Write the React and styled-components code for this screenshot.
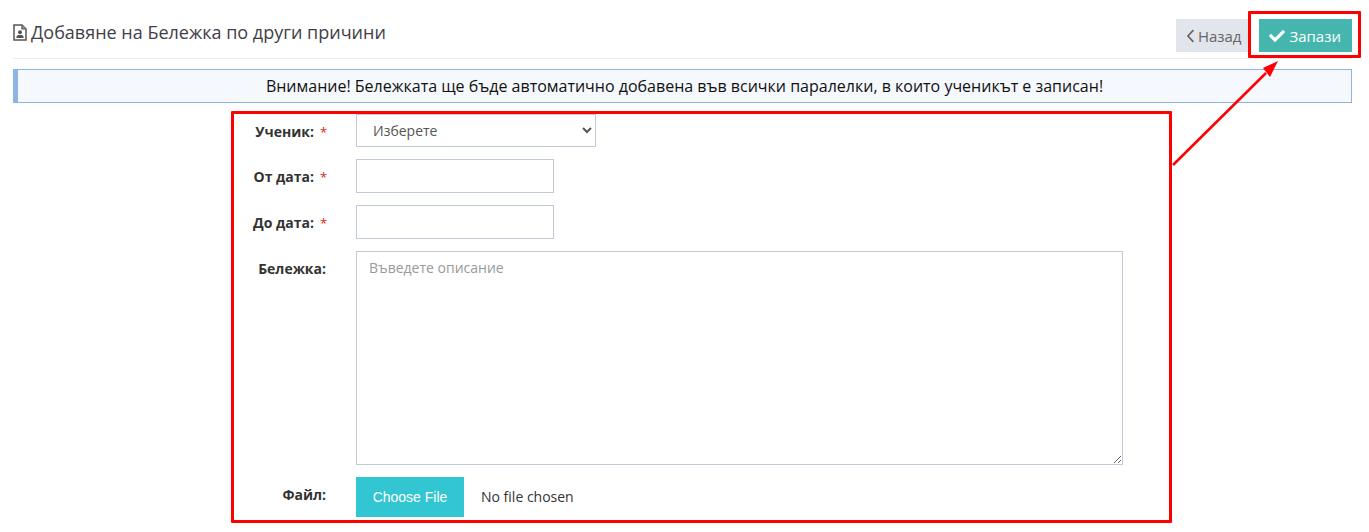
import React from 'react';
import styled, { createGlobalStyle } from 'styled-components';
import { FaCheck } from 'react-icons/fa';

const GlobalStyle = createGlobalStyle`
  html, body {
    margin: 0;
    padding: 0;
    background: #fff;
    font-family: "Open Sans", sans-serif;
  }
`;

const Page = styled.div`
  position: relative;
  width: 1369px;
  height: 532px;
  padding: 18px 17px 0 13px;
  box-sizing: border-box;
  overflow: hidden;
`;

const Header = styled.div`
  display: flex;
  justify-content: space-between;
  align-items: flex-start;
  height: 40px;
  border-bottom: 1px solid #ebedf2;
`;

const Title = styled.h3`
  display: flex;
  align-items: center;
  gap: 4px;
  margin: 0;
  padding-top: 2px;
  font-size: 18px;
  line-height: 24px;
  font-weight: 400;
  color: #3f4047;
`;

const Actions = styled.div`
  display: flex;
  gap: 8px;
  margin-top: 1px;
`;

const ActionButton = styled.button`
  display: flex;
  align-items: center;
  gap: ${props => (props.primary ? '4px' : '3px')};
  height: 33px;
  border: none;
  padding: 0 ${props => (props.primary ? '11px' : '10px')} 0 10px;
  background: ${props => (props.primary ? '#44b6ae' : '#e1e5ec')};
  color: ${props => (props.primary ? '#fff' : '#666')};
  font-family: "Open Sans", sans-serif;
  font-size: 15px;
`;

const Notice = styled.div`
  margin-top: 10px;
  height: 34px;
  box-sizing: border-box;
  border: 1px solid #8eb4e3;
  border-left-width: 5px;
  background: #f5f8fd;
  color: #111;
  font-size: 16px;
  line-height: 32px;
  text-align: center;
`;

const Form = styled.form`
  display: flex;
  flex-direction: column;
  gap: 12px;
  margin-top: 11px;
`;

const Row = styled.div`
  display: grid;
  grid-template-columns: 313px 1fr;
  column-gap: 30px;
  align-items: start;
`;

const Label = styled.label`
  display: flex;
  justify-content: flex-end;
  gap: 6px;
  padding-top: 8px;
  font-size: 14px;
  line-height: 20px;
  font-weight: 700;
  color: #333;
`;

const Star = styled.span`
  width: 6px;
  color: #e02222;
  font-size: 13px;
  font-weight: 400;
`;

const Select = styled.select`
  display: block;
  width: 240px;
  height: 33px;
  box-sizing: border-box;
  border: 1px solid #c2cad8;
  border-radius: 0;
  padding: 0 12px;
  background: #fff;
  color: #555;
  font-family: "Open Sans", sans-serif;
  font-size: 14px;
`;

const DateInput = styled.input`
  display: block;
  width: 198px;
  height: 34px;
  box-sizing: border-box;
  border: 1px solid #c2cad8;
  background: #fff;
`;

const Note = styled.textarea`
  display: block;
  width: 767px;
  height: 214px;
  box-sizing: border-box;
  border: 1px solid #c2cad8;
  border-radius: 0;
  padding: 6px 12px;
  outline: none;
  font-family: "Open Sans", sans-serif;
  font-size: 14px;
  line-height: 20px;

  &::placeholder {
    color: #999;
    opacity: 1;
  }
`;

const FileInput = styled.input`
  display: block;
  height: 40px;
  font-family: "Open Sans", sans-serif;
  font-size: 14px;
  line-height: 40px;
  color: #333;

  &::file-selector-button {
    width: 108px;
    height: 40px;
    margin-right: 17px;
    border: none;
    background: #32c5d2;
    color: #fff;
    font-family: "Liberation Sans", sans-serif;
    font-size: 14px;
  }
`;

const Marker = styled.div`
  position: absolute;
  left: ${props => props.x}px;
  top: ${props => props.y}px;
  width: ${props => props.w}px;
  height: ${props => props.h}px;
  box-sizing: border-box;
  border: 3px solid #ff0000;
  border-radius: 1px;
  pointer-events: none;
`;

const Arrow = styled.svg`
  position: absolute;
  left: 1165px;
  top: 55px;
  pointer-events: none;
`;

const NoteIcon = () => (
  <svg width="14" height="17" viewBox="0 0 14 17">
    <path d="M1 1h8l4 4v11H1z" fill="#fff" stroke="#555" strokeWidth="1.5" />
    <path d="M9 1v4h4" fill="#999" stroke="#555" strokeWidth="1.2" />
    <circle cx="7" cy="8.2" r="2" fill="#555" />
    <path d="M3.5 14v-1.4c0-1 1-1.6 3.5-1.6s3.5.6 3.5 1.6V14z" fill="#555" />
  </svg>
);

const ChevronLeft = () => (
  <svg width="9" height="14" viewBox="0 0 9 14">
    <path d="M7.4 1.2 2 7l5.4 5.8" fill="none" stroke="#666" strokeWidth="1.7" />
  </svg>
);

const App = () => (
  <Page>
    <GlobalStyle />
    <Header>
      <Title>
        <NoteIcon />
        Добавяне на Бележка по други причини
      </Title>
      <Actions>
        <ActionButton>
          <ChevronLeft />
          Назад
        </ActionButton>
        <ActionButton primary>
          <FaCheck size={16} color="#fff" />
          Запази
        </ActionButton>
      </Actions>
    </Header>
    <Notice>Внимание! Бележката ще бъде автоматично добавена във всички паралелки, в които ученикът е записан!</Notice>
    <Form>
      <Row>
        <Label>
          Ученик: <Star>*</Star>
        </Label>
        <Select defaultValue="">
          <option value="">Изберете</option>
        </Select>
      </Row>
      <Row>
        <Label>
          От дата: <Star>*</Star>
        </Label>
        <DateInput type="text" />
      </Row>
      <Row>
        <Label>
          До дата: <Star>*</Star>
        </Label>
        <DateInput type="text" />
      </Row>
      <Row>
        <Label>Бележка:</Label>
        <Note placeholder="Въведете описание" />
      </Row>
      <Row>
        <Label>Файл:</Label>
        <FileInput type="file" />
      </Row>
    </Form>
    <Marker x={1248} y={11} w={113} h={47} />
    <Marker x={231} y={111} w={941} h={412} />
    <Arrow width="120" height="115" viewBox="0 0 120 115">
      <path d="M8 110 101 18" stroke="#ff0000" strokeWidth="2.5" fill="none" />
      <path d="M113 6 105 22 98 13z" fill="#ff0000" />
    </Arrow>
  </Page>
);

export default App;
